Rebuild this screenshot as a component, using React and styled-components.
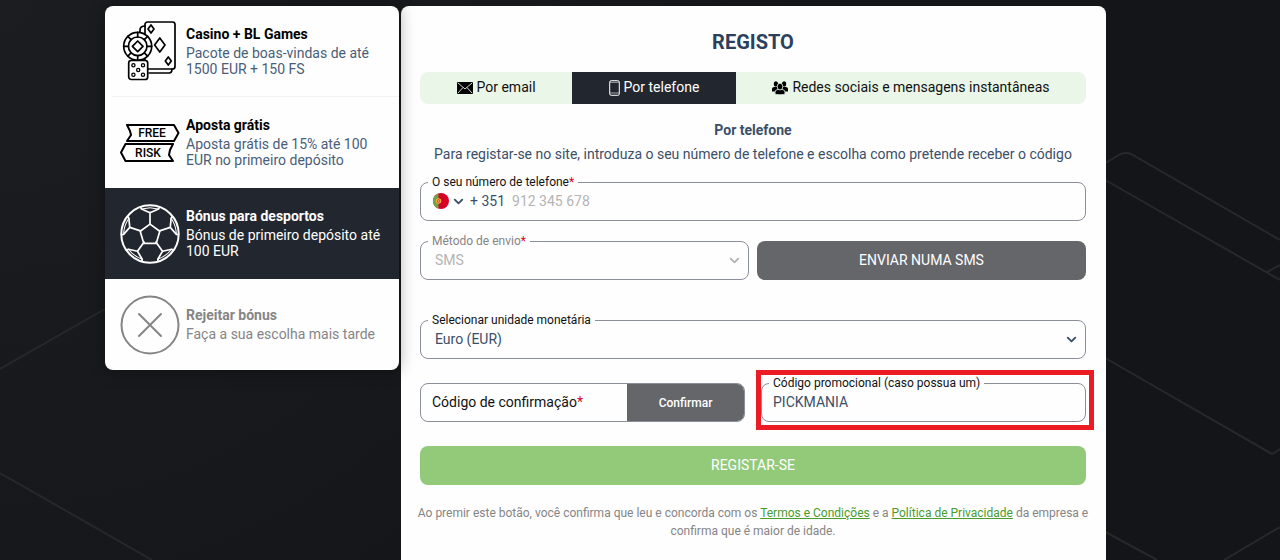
import React, { useState } from 'react';
import styled, { createGlobalStyle } from 'styled-components';
import { ChevronDown } from 'lucide-react';

const GlobalStyle = createGlobalStyle`
  * {
    box-sizing: border-box;
  }

  body {
    margin: 0;
    background-color: #141519;
    font-family: Roboto, 'Liberation Sans', sans-serif;
    font-size: 14px;
    color: #3b4f68;
  }

  button, input, select {
    font-family: inherit;
    font-size: 14px;
    color: inherit;
  }
`;

const Page = styled.div`
  display: flex;
  align-items: flex-start;
  gap: 2px;
  min-height: 100vh;
  padding: 6px 174px 0 105px;
  background: radial-gradient(circle at 0 0, #1c1d20, #141519 60%);
  position: relative;
  overflow: hidden;
`;

const Backdrop = styled.svg`
  position: absolute;
  top: 0;
  left: 0;
  width: 100%;
  fill: none;
  stroke: #27282b;
  stroke-width: 2;
`;

const BonusList = styled.ul`
  width: 294px;
  flex-shrink: 0;
  margin: 0;
  padding: 0;
  list-style: none;
  background-color: #fefefe;
  border-radius: 8px;
  overflow: hidden;
  box-shadow: 0 0 16px rgba(0, 0, 0, 0.35);
  position: relative;
  z-index: 1;
`;

const BonusItem = styled.li`
  padding-left: 7px;
  background-color: ${(props) => (props.$active ? '#22262f' : 'transparent')};
  color: ${(props) => (props.$active ? '#ffffff' : props.$muted ? '#858585' : '#4a5d78')};
`;

const BonusButton = styled.button`
  display: flex;
  align-items: center;
  gap: 6px;
  width: 100%;
  min-height: 91px;
  padding: 0 8px;
  background: none;
  border: none;
  border-bottom: ${(props) => (props.$line ? '1px solid #f1f3f4' : 'none')};
  text-align: left;
  cursor: pointer;
`;

const BonusTitle = styled.strong`
  display: block;
  margin-bottom: 3px;
  line-height: 16px;
  font-weight: 700;
  color: ${(props) => (props.$dark ? '#000000' : 'inherit')};
`;

const BonusText = styled.span`
  display: block;
  line-height: 16px;
`;

const IconBox = styled.svg`
  width: 60px;
  height: 60px;
  flex-shrink: 0;
  fill: none;
  stroke: ${(props) => (props.$dark ? '#000000' : 'currentColor')};
  stroke-width: 2;
  stroke-linejoin: round;
  stroke-linecap: round;
`;

const Ribbon = styled.text`
  fill: #000000;
  stroke: none;
  font-size: 12px;
  font-weight: 500;
  text-anchor: middle;
`;

const Panel = styled.main`
  flex: 1;
  min-width: 0;
  min-height: calc(100vh - 6px);
  padding: 24px 20px 20px 19px;
  background-color: #fefefe;
  border-radius: 8px 8px 0 0;
  position: relative;
`;

const Title = styled.h1`
  margin: 0 0 18px;
  font-size: 20px;
  line-height: 24px;
  font-weight: 700;
  text-align: center;
  color: #2b405c;
`;

const Tabs = styled.div`
  display: flex;
  margin-bottom: 18px;
  background-color: #eaf6e8;
  border-radius: 8px;
  overflow: hidden;
`;

const Tab = styled.button`
  flex: 1 1 auto;
  display: flex;
  align-items: center;
  justify-content: center;
  gap: 4px;
  height: 32px;
  padding: 0 0 2px;
  border: none;
  background-color: ${(props) => (props.$active ? '#22262f' : 'transparent')};
  color: ${(props) => (props.$active ? '#ffffff' : '#111111')};
  cursor: pointer;

  svg {
    margin-top: 2px;
  }
`;

const Subtitle = styled.h2`
  margin: 0 0 8px;
  font-size: 14px;
  line-height: 16px;
  font-weight: 700;
  text-align: center;
`;

const Intro = styled.p`
  margin: 0 0 13px;
  line-height: 16px;
  text-align: center;
`;

const Row = styled.div`
  display: grid;
  grid-template-columns: ${(props) => props.$columns || '1fr'};
  gap: ${(props) => props.$gap || 0}px;
  align-items: end;
  margin-bottom: ${(props) => props.$bottom}px;
`;

const Field = styled.fieldset`
  min-width: 0;
  height: 46px;
  margin: 0;
  padding: 0 6px 0 7px;
  border: 1px solid #8b8f9a;
  border-radius: 8px;
  color: ${(props) => (props.$disabled ? '#b4b4b4' : 'inherit')};
`;

const Legend = styled.legend`
  padding: 0 4px;
  font-size: 12px;
  line-height: 14px;
  color: ${(props) => (props.$disabled ? '#858585' : '#111111')};
`;

const Required = styled.span`
  color: #e3001b;
`;

const Control = styled.div`
  display: flex;
  align-items: center;
  height: 24px;
  padding-left: ${(props) => props.$indent}px;
`;

const Country = styled.button`
  display: flex;
  align-items: center;
  gap: 2px;
  padding: 0;
  border: none;
  background: none;
  cursor: pointer;
`;

const Prefix = styled.span`
  margin: 0 7px 0 4px;
`;

const Input = styled.input`
  flex: 1;
  min-width: 0;
  width: 100%;
  padding: 0;
  border: none;
  outline: none;
  background: none;

  &::placeholder {
    color: #b4b4b4;
    opacity: 1;
  }
`;

const Select = styled.select`
  flex: 1;
  min-width: 0;
  padding: 0;
  border: none;
  outline: none;
  background: none;
  appearance: none;

  &:disabled {
    color: #b4b4b4;
    opacity: 1;
  }
`;

const Button = styled.button`
  width: 100%;
  height: 39px;
  padding: 0 0 2px;
  border: none;
  border-radius: 8px;
  background-color: ${(props) => (props.$green ? '#93ca7a' : '#65666a')};
  color: #ffffff;
  cursor: pointer;
`;

const CodeBox = styled.div`
  display: flex;
  height: 39px;
  border: 1px solid #8b8f9a;
  border-radius: 8px;
  overflow: hidden;
`;

const CodeLabel = styled.label`
  padding-left: 11px;
  line-height: 37px;
  color: #111111;
`;

const ConfirmButton = styled.button`
  width: 117px;
  flex-shrink: 0;
  padding: 0;
  border: none;
  background-color: #65666a;
  color: #ffffff;
  font-size: 12px;
  font-weight: 500;
  cursor: pointer;
`;

const Promo = styled.div`
  min-width: 0;
  position: relative;

  &::after {
    content: '';
    position: absolute;
    top: -6px;
    right: -8px;
    bottom: -8px;
    left: -5px;
    border: 5px solid #ec1c24;
    pointer-events: none;
  }
`;

const Terms = styled.p`
  margin: 19px -5px 0;
  font-size: 12px;
  line-height: 18px;
  text-align: center;
  color: #858585;
`;

const TermsLink = styled.a`
  color: #4a9a2c;
  text-decoration: underline;
`;

const CasinoIcon = () => (
  <IconBox viewBox="0 0 60 60" $dark>
    <g strokeWidth="1.7">
      <rect x="25" y="1" width="30" height="47" rx="2.5" />
      <path d="M20 11 V9 Q20 5 25 5 M29 52 H49 Q52 52 52 48" />
      <path d="M31 4 L34 8 L31 12 L28 8 Z M48.3 36 L51.3 40 L48.3 44 L45.3 40 Z" />
      <path d="M39.8 17 L45 24 L39.8 31 L34.6 24 Z" />
      <circle cx="17.7" cy="25.3" r="14" fill="#fefefe" />
      <circle cx="17.7" cy="25.3" r="9.3" />
      <path d="M17.7 20 L23 25.3 L17.7 30.6 L12.4 25.3 Z" />
      <path d="M17.7 11.3 V16 M17.7 34.6 V39.3 M3.7 25.3 H8.4 M27 25.3 H31.7 M7.8 15.4 L11.1 18.7 M27.6 15.4 L24.3 18.7 M7.8 35.2 L11.1 31.9 M27.6 35.2 L24.3 31.9" />
      <rect x="8.7" y="39.5" width="19" height="19" rx="2.5" fill="#fefefe" />
    </g>
    <g strokeWidth="1.3">
      <circle cx="13.4" cy="44.3" r="1.6" />
      <circle cx="23" cy="44.3" r="1.6" />
      <circle cx="18.2" cy="49" r="1.6" />
      <circle cx="13.4" cy="53.7" r="1.6" />
      <circle cx="23" cy="53.7" r="1.6" />
    </g>
  </IconBox>
);

const FreeRiskIcon = () => (
  <IconBox viewBox="0 0 60 60" $dark>
    <path d="M7 12 H54 L58.5 20 L54 28 H7 L11 22 L10 18 Z" />
    <path d="M53 31 H5.5 L1 39.5 L5.5 48 H53 L49 42 L50 37 Z" />
    <Ribbon x="32" y="24">FREE</Ribbon>
    <Ribbon x="28" y="44">RISK</Ribbon>
  </IconBox>
);

const BallIcon = () => (
  <IconBox viewBox="-30 -30 60 60">
    <circle r="28.7" />
    <path d="M0 -9.9 L9.8 -2.8 L6.2 9.4 H-6.2 L-9.8 -2.8 Z" strokeWidth="1.7" />
    {[0, 72, 144, 216, 288].map((angle) => (
      <g key={angle} transform={`rotate(${angle})`} strokeWidth="1.7">
        <path d="M0 -10 V-21.3 M-9.5 -26.8 L-8.5 -25 L0 -21.3 L8.5 -25 L9.5 -26.8" />
        <path d="M-8.5 -25 Q0 -27.5 8.5 -25" strokeWidth="1" />
      </g>
    ))}
  </IconBox>
);

const RejectIcon = () => (
  <IconBox viewBox="-30 -30 60 60">
    <circle r="28.5" />
    <path d="M-11 -11 L11 11 M11 -11 L-11 11" />
  </IconBox>
);

const MailIcon = () => (
  <svg width="16" height="12" viewBox="0 0 16 12">
    <rect width="16" height="12" rx="1" fill="#000000" />
    <path d="M1 1 L8 7 L15 1 M1 11 L6 5.5 M15 11 L10 5.5" fill="none" stroke="#eaf6e8" strokeWidth="0.9" />
  </svg>
);

const PhoneIcon = () => (
  <svg width="11" height="16" viewBox="0 0 11 16" fill="none" stroke="#ffffff">
    <rect x="0.7" y="0.7" width="9.6" height="14.6" rx="1.5" />
    <path d="M1 2.3 H10 M1 13 H10" strokeWidth="0.6" />
  </svg>
);

const PeopleIcon = () => (
  <svg width="16" height="14" viewBox="0 0 16 14" fill="#000000">
    <ellipse cx="3.9" cy="2.9" rx="2.2" ry="2.6" />
    <ellipse cx="12.1" cy="2.9" rx="2.2" ry="2.6" />
    <path d="M0 10.5 V8.6 Q0 5.8 3 5.8 H6 V10.5 Z M16 10.5 V8.6 Q16 5.8 13 5.8 H10 V10.5 Z" />
    <g stroke="#eaf6e8" strokeWidth="0.8">
      <path d="M2.8 12.2 Q2.8 8.6 6 8.4 H10 Q13.2 8.6 13.2 12.2 Q13 13.8 8 13.8 Q3 13.8 2.8 12.2 Z" />
      <ellipse cx="8" cy="5.6" rx="2.8" ry="3.4" />
    </g>
  </svg>
);

const FlagIcon = () => (
  <svg width="16" height="16" viewBox="0 0 16 16">
    <circle cx="8" cy="8" r="8" fill="#d80027" />
    <path d="M5.5 0.4 A8 8 0 0 0 5.5 15.6 Z" fill="#6da544" />
    <circle cx="5.5" cy="8" r="2.8" fill="#f5a93c" />
    <circle cx="5.5" cy="8" r="1.7" fill="#e0452c" />
    <circle cx="5.5" cy="8" r="0.8" fill="#f0d0a0" />
  </svg>
);

const bonuses = [
  { id: 'casino', title: 'Casino + BL Games', text: 'Pacote de boas-vindas de até 1500 EUR + 150 FS', icon: CasinoIcon, line: true },
  { id: 'free', title: 'Aposta grátis', text: 'Aposta grátis de 15% até 100 EUR no primeiro depósito', icon: FreeRiskIcon },
  { id: 'sport', title: 'Bónus para desportos', text: 'Bónus de primeiro depósito até 100 EUR', icon: BallIcon },
  { id: 'none', title: 'Rejeitar bónus', text: 'Faça a sua escolha mais tarde', icon: RejectIcon, muted: true },
];

const RegisterPage = () => {
  const [bonus, setBonus] = useState('sport');
  const [tab, setTab] = useState('phone');
  const [phone, setPhone] = useState('');
  const [currency, setCurrency] = useState('EUR');
  const [code, setCode] = useState('');
  const [promo, setPromo] = useState('PICKMANIA');

  return (
    <Page>
      <GlobalStyle />
      <Backdrop viewBox="0 0 1280 560" aria-hidden="true">
        <path d="M0 369 L105 309 M0 473 L152 560" />
        <path d="M1100 166 L1121 154 Q1126 152 1131 154 L1280 240 M1100 177 L1280 280 M1267 272 L1280 265" />
        <path d="M1100 355 L1272 454 L1280 449 M1100 529 L1157 560 M1224 560 L1280 527" />
      </Backdrop>

      <BonusList>
        {bonuses.map(({ id, title, text, icon: Icon, muted, line }) => (
          <BonusItem key={id} $active={bonus === id} $muted={muted}>
            <BonusButton type="button" $line={line} onClick={() => setBonus(id)}>
              <Icon />
              <span>
                <BonusTitle $dark={bonus !== id && !muted}>{title}</BonusTitle>
                <BonusText>{text}</BonusText>
              </span>
            </BonusButton>
          </BonusItem>
        ))}
      </BonusList>

      <Panel>
        <Title>REGISTO</Title>
        <Tabs>
          <Tab type="button" $active={tab === 'email'} onClick={() => setTab('email')}>
            <MailIcon />
            Por email
          </Tab>
          <Tab type="button" $active={tab === 'phone'} onClick={() => setTab('phone')}>
            <PhoneIcon />
            Por telefone
          </Tab>
          <Tab type="button" $active={tab === 'social'} onClick={() => setTab('social')}>
            <PeopleIcon />
            Redes sociais e mensagens instantâneas
          </Tab>
        </Tabs>

        <Subtitle>Por telefone</Subtitle>
        <Intro>
          Para registar-se no site, introduza o seu número de telefone e escolha como pretende receber o código
        </Intro>

        <form onSubmit={(e) => e.preventDefault()}>
          <Row $bottom={13}>
            <Field>
              <Legend>
                <label htmlFor="phone">O seu número de telefone<Required>*</Required></label>
              </Legend>
              <Control $indent={5}>
                <Country type="button" aria-label="Portugal">
                  <FlagIcon />
                  <ChevronDown size={15} strokeWidth={3} />
                </Country>
                <Prefix>+ 351</Prefix>
                <Input
                  type="tel"
                  id="phone"
                  placeholder="912 345 678"
                  value={phone}
                  onChange={(e) => setPhone(e.target.value)}
                />
              </Control>
            </Field>
          </Row>

          <Row $columns="1fr 1fr" $gap={8} $bottom={33}>
            <Field $disabled>
              <Legend $disabled>
                <label htmlFor="method">Método de envio<Required>*</Required></label>
              </Legend>
              <Control $indent={7}>
                <Select id="method" disabled>
                  <option>SMS</option>
                </Select>
                <ChevronDown size={15} strokeWidth={3} />
              </Control>
            </Field>
            <Button type="button">ENVIAR NUMA SMS</Button>
          </Row>

          <Row $bottom={17}>
            <Field>
              <Legend>
                <label htmlFor="currency">Selecionar unidade monetária</label>
              </Legend>
              <Control $indent={7}>
                <Select id="currency" value={currency} onChange={(e) => setCurrency(e.target.value)}>
                  <option value="EUR">Euro (EUR)</option>
                </Select>
                <ChevronDown size={15} strokeWidth={3} />
              </Control>
            </Field>
          </Row>

          <Row $columns="1fr 1fr" $gap={16} $bottom={24}>
            <CodeBox>
              <CodeLabel htmlFor="code">Código de confirmação<Required>*</Required></CodeLabel>
              <Input type="text" id="code" value={code} onChange={(e) => setCode(e.target.value)} />
              <ConfirmButton type="button">Confirmar</ConfirmButton>
            </CodeBox>
            <Promo>
              <Field>
                <Legend>
                  <label htmlFor="promo">Código promocional (caso possua um)</label>
                </Legend>
                <Control $indent={4}>
                  <Input type="text" id="promo" value={promo} onChange={(e) => setPromo(e.target.value)} />
                </Control>
              </Field>
            </Promo>
          </Row>

          <Button type="submit" $green>REGISTAR-SE</Button>
        </form>

        <Terms>
          Ao premir este botão, você confirma que leu e concorda com os{' '}
          <TermsLink href="#termos">Termos e Condições</TermsLink> e a{' '}
          <TermsLink href="#privacidade">Política de Privacidade</TermsLink> da empresa e confirma que é maior de
          idade.
        </Terms>
      </Panel>
    </Page>
  );
};

export default RegisterPage;
